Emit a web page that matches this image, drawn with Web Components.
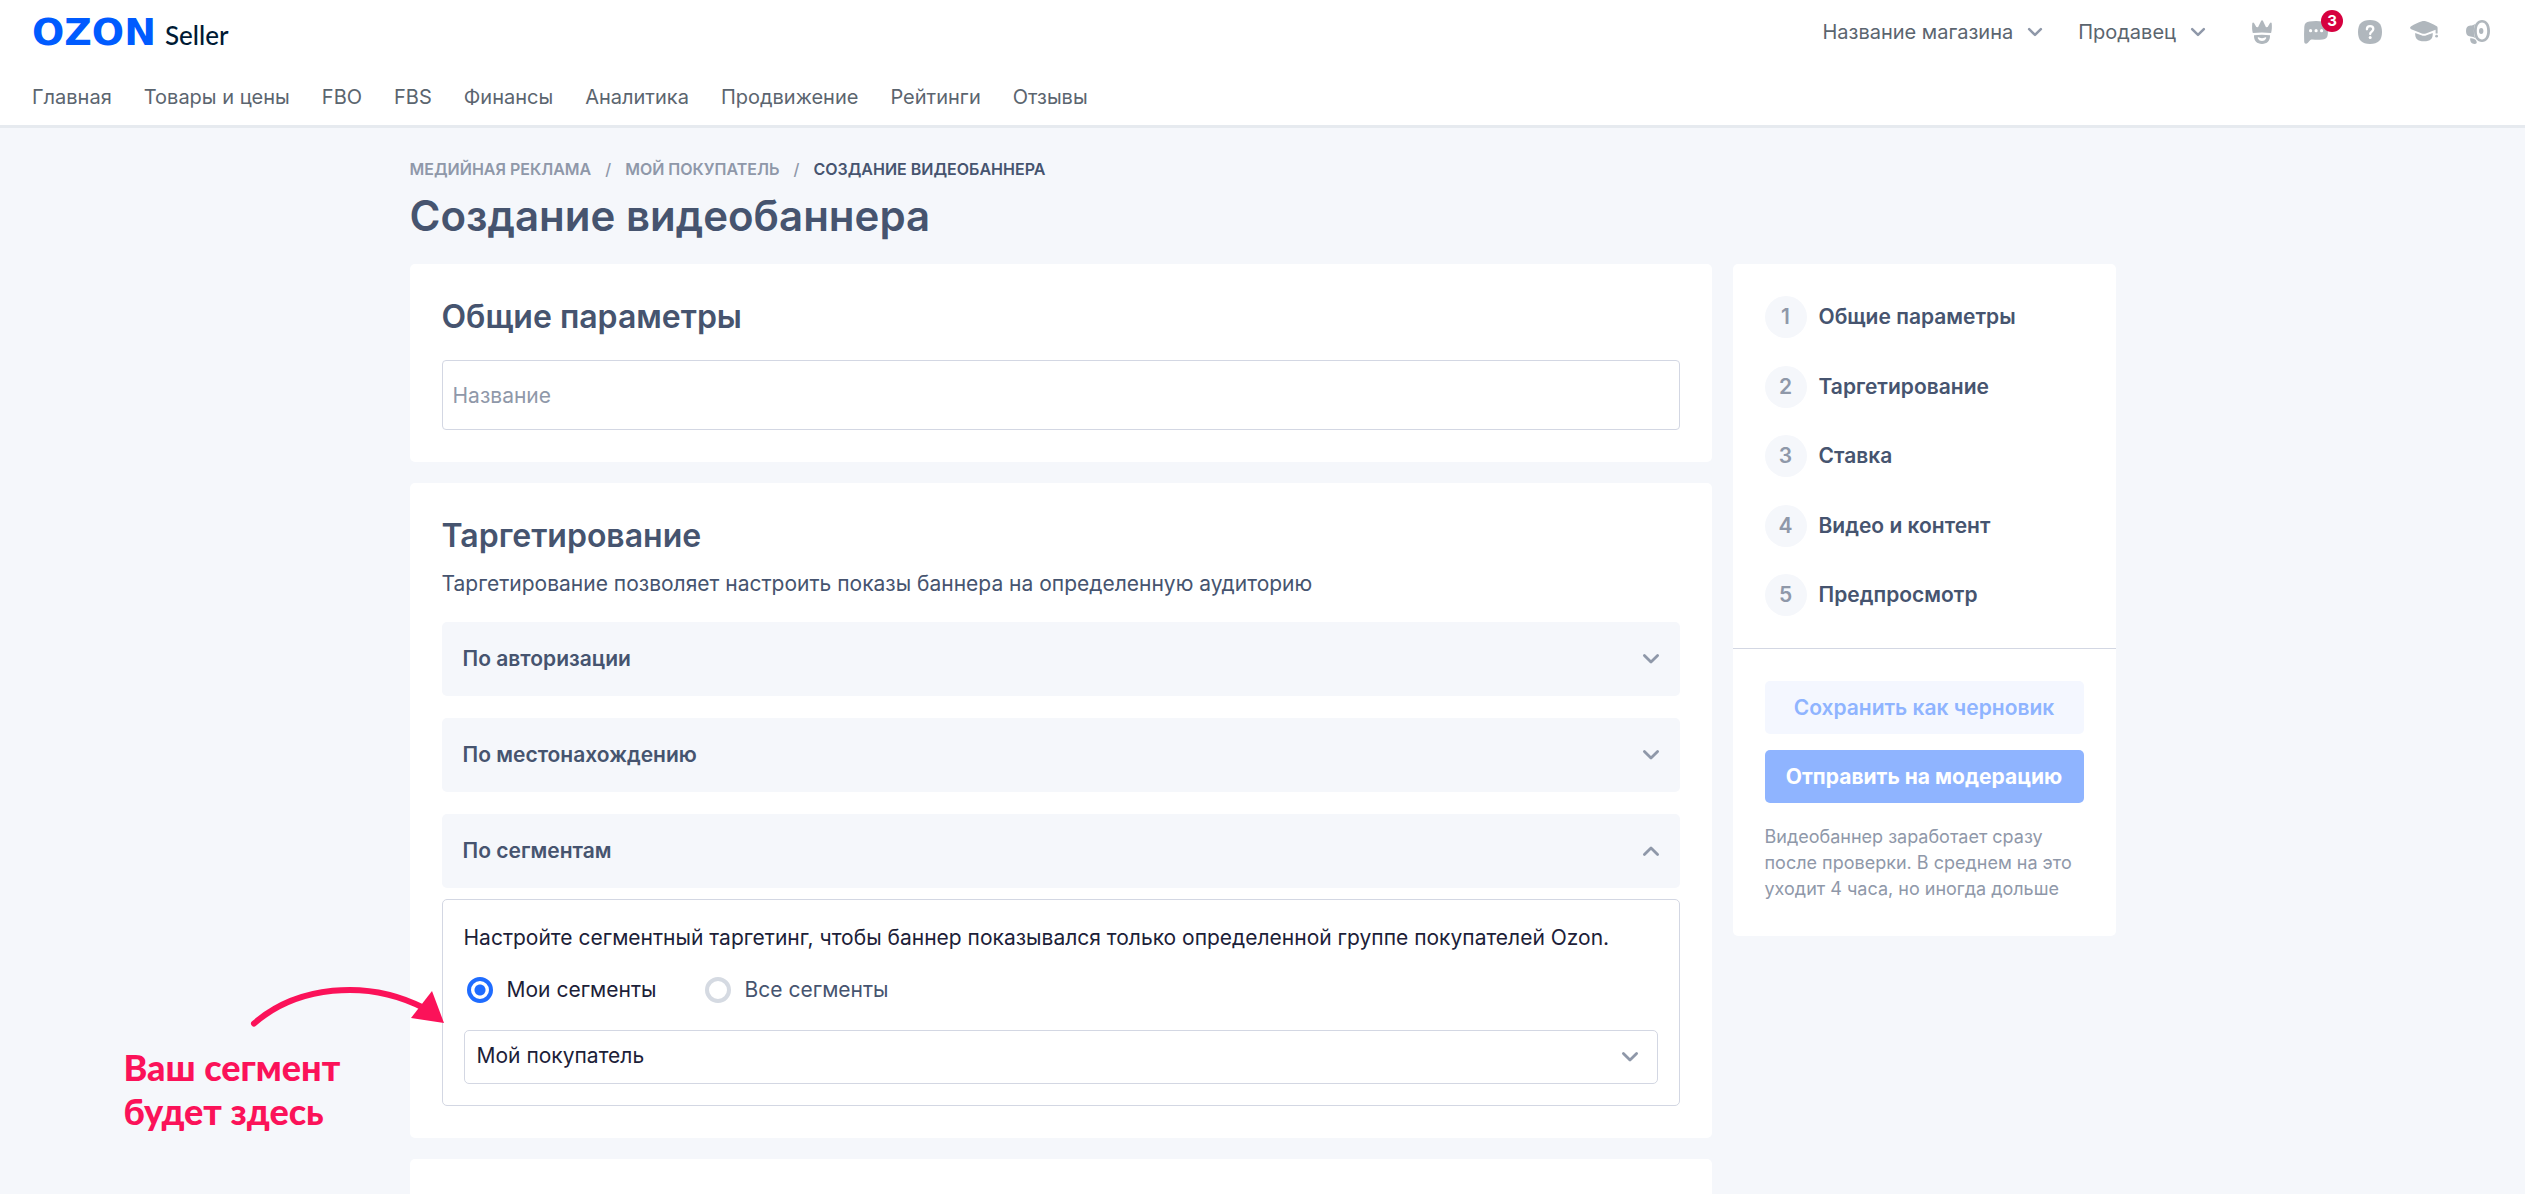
<!DOCTYPE html>
<html lang="ru">
<head>
<meta charset="utf-8">
<title>Создание видеобаннера</title>
<meta name="viewport" content="width=device-width, initial-scale=1">
<style>
  :root {
    --ink: #46546f;
    --ink-dark: #1c2138;
    --muted: #8f98a9;
    --nav: #5b656f;
    --line: #d3d7e3;
    --soft: #f5f7fb;
    --blue: #1f6cff;
    --blue-soft: #8fb4ff;
    --accent: #fb1259;
  }
  body {
    margin: 0;
    background: var(--soft);
    color: var(--ink);
    font: 400 21px/28px Inter, "Open Sans", sans-serif;
  }
</style>
</head>
<body>
<seller-page></seller-page>

<script>
const define = (name, html, setup) => {
  const template = document.createElement('template');
  template.innerHTML = html;
  customElements.define(name, class extends HTMLElement {
    constructor() {
      super();
      this.attachShadow({ mode: 'open' }).append(template.content.cloneNode(true));
    }
    connectedCallback() {
      if (setup && !this.ready) { this.ready = true; setup(this, this.shadowRoot); }
    }
  });
};

define('chevron-icon', `
  <style>
    :host { display: block; width: 18px; color: var(--muted); }
    :host([up]) svg { transform: rotate(180deg); }
    svg { display: block; width: 100%; }
  </style>
  <svg viewBox="0 0 18 12" fill="none" stroke="currentColor" stroke-width="2.8" stroke-linecap="round" stroke-linejoin="round" aria-hidden="true"><path d="M2.4 2.4 9 9l6.600-6.600"/></svg>
`);

define('seller-logo', `
  <style>
    :host { display: block; padding-top: 3px; }
    a { display: flex; align-items: baseline; gap: 9px; text-decoration: none; line-height: 40px; }
    .brand { font: 700 38px/40px "DejaVu Sans", sans-serif; color: #005bff; }
    .sub { font: 500 26px/40px Lato, sans-serif; color: #001a34; }
  </style>
  <a href="#"><span class="brand">OZON</span><span class="sub">Seller</span></a>
`);

define('header-menu', `
  <style>
    :host { display: block; }
    button { display: flex; align-items: center; gap: 14px; padding: 0; border: 0; background: none; font: 400 20px/28px Inter, sans-serif; color: var(--nav); cursor: pointer; }
    chevron-icon { width: 16px; }
  </style>
  <button type="button"><slot></slot><chevron-icon></chevron-icon></button>
`);

define('header-icons', `
  <style>
    :host { display: flex; gap: 30px; }
    button { position: relative; display: block; width: 24px; height: 24px; padding: 0; border: 0; background: none; color: #b0b7bd; cursor: pointer; }
    svg { display: block; width: 24px; height: 24px; overflow: visible; }
    .badge { position: absolute; left: 17px; top: -10px; width: 22px; border-radius: 50%; background: #d6003f; color: #fff; font: 700 15px/22px Inter, sans-serif; text-align: center; }
  </style>
  <button type="button" aria-label="Премиум">
    <svg viewBox="0 0 24 24" fill="currentColor"><path d="M2.300 3.300c.2-1 1.300-1 1.700-.2L6.300 7 8 7.200 11.200.8c.4-.8 1.300-.8 1.700 0L16 7.200l1.700-.2L20 3.100c.5-.8 1.500-.8 1.700.2.4 3.500.2 7-.6 9.800-5.800-.8-12.500-.8-18.300 0-.8-2.800-.9-6.300-.5-9.800Z"/><path fill-rule="evenodd" d="M4 15.300c5.300-.7 10.700-.7 16 0 .3 5.500-3 8.700-8 8.700s-8.300-3.200-8-8.700Zm4.500 1.900c-.7 0-.9.600-.6 1.200.9 1.700 2.300 2.500 4.100 2.500s3.200-.8 4.100-2.500c.3-.6.1-1.200-.6-1.200-.8 0-1.700 1-3.500 1s-2.700-1-3.500-1Z"/></svg>
  </button>
  <button type="button" aria-label="Сообщения">
    <svg viewBox="0 0 24 24" fill="currentColor"><path fill-rule="evenodd" d="M5.500 1.600C9.800.9 14.500.9 18.600 1.600c3.300.5 5 2 5.200 5.200.2 2.700.2 4.900 0 7.500-.3 3.300-1.800 4.800-5.100 5.200-3.300.4-6.700.4-10.100.1-1.300-.1-2.100.3-3.200 1.500l-1.500 1.600C2.200 24.400.3 23.700.2 21.400 0 16.500 0 11.700.3 6.800.5 3.600 2.300 2.100 5.500 1.600ZM6.600 9.100a1.600 1.600 0 1 0 0 3.200 1.600 1.600 0 0 0 0-3.200Zm5.500 0a1.600 1.600 0 1 0 0 3.200 1.600 1.600 0 0 0 0-3.200Zm5.500 0a1.600 1.600 0 1 0 0 3.200 1.600 1.600 0 0 0 0-3.200Z"/></svg>
    <span class="badge">3</span>
  </button>
  <button type="button" aria-label="Помощь">
    <svg viewBox="0 0 24 24"><path fill="currentColor" d="M12 0c8.200 0 12 3.800 12 12s-3.800 12-12 12S0 20.200 0 12 3.800 0 12 0Z"/><path d="M8.900 9.300c0-2 1.300-3.200 3.200-3.200s3.200 1.200 3.200 2.900c0 2.600-3.100 2.500-3.100 5" fill="none" stroke="#fff" stroke-width="2.300" stroke-linecap="round"/><circle cx="12.200" cy="17.600" r="1.500" fill="#fff"/></svg>
  </button>
  <button type="button" aria-label="Обучение">
    <svg viewBox="0 0 24 24" fill="currentColor"><path d="M-.8 6.300C2.500 4.100 6 2.500 10 1.200c1.200-.4 2.600-.4 3.800 0 4 1.300 7.500 2.900 10.900 5.100.7.500.9.900.9 1.700V13.600h-2V9.800l-9.700 3.600c-1.300.5-2.700.5-4 0L-.8 9.200c-1.500-.7-1.500-2 0-2.900Z"/><path d="M3.200 12.900 9.400 15.300c1.700.7 3.400.7 5.100 0l6.200-2.400c.4 5.900-2.300 8.300-8.700 8.300s-9.100-2.400-8.800-8.300Z"/><circle cx="24.600" cy="16.200" r="1.400"/></svg>
  </button>
  <button type="button" aria-label="Новости">
    <svg viewBox="0 0 24 24" fill="currentColor"><path fill-rule="evenodd" d="M16 0c4.800 0 8 4.300 8 11s-3.200 11-8 11-8-4.300-8-11 3.200-11 8-11Zm0 2.600c-3 0-5.200 3-5.200 8.400s2.200 8.400 5.200 8.400 5.200-3 5.200-8.400-2.200-8.400-5.200-8.400Z"/><ellipse cx="15.200" cy="11" rx="2.200" ry="3"/><path d="M9.500 3.700C8.400 5.600 7.900 8 7.900 11s.5 5.500 1.600 7.300c-1.600-1.200-3-1.700-5-1.800C1.300 16.300 0 14.600 0 11s1.300-5.300 4.500-5.500c2-.1 3.400-.6 5-1.800Z"/><path d="M4.200 18.300c2.900-.2 5.100.6 6.200 2.700.8 1.700.2 3-2 3-2.800 0-4.600-2.200-4.200-5.700Z"/></svg>
  </button>
`);

define('seller-header', `
  <style>
    :host { display: block; background: #fff; border-bottom: 3px solid #e6eaef; padding: 0 35px 14px 32px; font-size: 20px; }
    .top { display: flex; align-items: center; justify-content: space-between; height: 64px; }
    .tools { display: flex; align-items: center; gap: 35px; }
    header-icons { margin-left: 9px; }
    nav { display: flex; flex-wrap: wrap; gap: 0 32px; padding-top: 19px; }
    a { color: var(--nav); text-decoration: none; }
  </style>
  <div class="top">
    <seller-logo></seller-logo>
    <div class="tools">
      <header-menu>Название магазина</header-menu>
      <header-menu>Продавец</header-menu>
      <header-icons></header-icons>
    </div>
  </div>
  <nav>
    <a href="#">Главная</a><a href="#">Товары и цены</a><a href="#">FBO</a><a href="#">FBS</a><a href="#">Финансы</a><a href="#">Аналитика</a><a href="#">Продвижение</a><a href="#">Рейтинги</a><a href="#">Отзывы</a>
  </nav>
`);

define('bread-crumbs', `
  <style>
    :host { display: block; }
    ol { display: flex; gap: 14px; margin: 0; padding: 0; list-style: none; font-weight: 600; font-size: 16px; line-height: 24px; text-transform: uppercase; color: var(--muted); }
    li { display: flex; gap: 14px; }
    li + li::before { content: "/"; font-weight: 500; }
    a { color: inherit; text-decoration: none; }
    [aria-current] { color: var(--ink); }
  </style>
  <nav aria-label="Навигация"><ol>
    <li><a href="#">Медийная реклама</a></li>
    <li><a href="#">Мой покупатель</a></li>
    <li><span aria-current="page">Создание видеобаннера</span></li>
  </ol></nav>
`);

define('form-card', `
  <style>
    :host { display: block; box-sizing: border-box; background: #fff; border-radius: 5px; padding: 32px; }
    ::slotted(h2) { margin: 0 0 22px; font: 600 32px/42px Inter, sans-serif; }
  </style>
  <slot></slot>
`);

define('text-field', `
  <style>
    :host { display: block; }
    input { display: block; box-sizing: border-box; width: 100%; height: 70px; margin: 0; padding: 0 10px; border: 1px solid var(--line); border-radius: 4px; background: #fff; color: var(--ink-dark); font: 400 21px/28px Inter, sans-serif; }
    input::placeholder { color: var(--muted); opacity: 1; }
  </style>
  <input type="text" placeholder="Название" aria-label="Название">
`);

define('accordion-item', `
  <style>
    :host { display: block; }
    button { display: flex; align-items: center; justify-content: space-between; width: 100%; height: 74px; padding: 0 20px 0 21px; border: 0; border-radius: 5px; background: var(--soft); color: var(--ink); font: 600 21px/28px Inter, sans-serif; cursor: pointer; }
    .body { margin-top: 11px; }
    .body[hidden] { display: none; }
  </style>
  <button type="button" aria-expanded="false"><slot name="title"></slot><chevron-icon></chevron-icon></button>
  <div class="body" hidden><slot></slot></div>
`, (host, root) => {
  const button = root.querySelector('button');
  const body = root.querySelector('.body');
  const sync = () => {
    const open = host.hasAttribute('open');
    button.setAttribute('aria-expanded', open);
    root.querySelector('chevron-icon').toggleAttribute('up', open);
    body.hidden = !open || host.childElementCount < 2;
  };
  button.addEventListener('click', () => { host.toggleAttribute('open'); sync(); });
  sync();
});

define('callout-note', `
  <style>
    :host { display: flex; flex-direction: column; width: 320px; color: var(--accent); }
    svg { align-self: flex-end; display: block; width: 196px; height: 40px; overflow: visible; }
    p { margin: 17px 0 0; font: 900 36px/44px Lato, sans-serif; }
  </style>
  <svg viewBox="0 0 196 40" aria-hidden="true"><path d="M6 35.500C48-1 117-10 176 20" fill="none" stroke="currentColor" stroke-width="6" stroke-linecap="round"/><path fill="currentColor" d="M184 3 196 35 163 30Z"/></svg>
  <p>Ваш сегмент<br>будет здесь</p>
`);

define('segment-panel', `
  <style>
    :host { display: block; position: relative; border: 1px solid var(--line); border-radius: 5px; padding: 21px; }
    p { margin: 0; line-height: 34px; color: var(--ink-dark); }
    fieldset { display: flex; gap: 45px; margin: 21px 0 26px; padding: 0; border: 0; }
    label { display: flex; align-items: center; gap: 14px; padding-left: 3px; cursor: pointer; }
    label:has(:checked) { color: var(--ink-dark); }
    input { appearance: none; width: 26px; height: 26px; margin: 0; border: 4px solid #d5dae2; border-radius: 50%; background: #fff; }
    input:checked { border-color: var(--blue); background: radial-gradient(circle, var(--blue) 5px, #fff 6px); }
    .select { display: grid; align-items: center; }
    select, .select chevron-icon { grid-area: 1 / 1; }
    select { appearance: none; width: 100%; height: 54px; margin: 0; padding: 0 48px 3px 12px; border: 1px solid var(--line); border-radius: 5px; background: #fff; color: var(--ink-dark); font: 400 21px/28px Inter, sans-serif; }
    .select chevron-icon { justify-self: end; margin-right: 19px; pointer-events: none; }
    callout-note { position: absolute; right: calc(100% - 1px); top: 88px; }
  </style>
  <p>Настройте сегментный таргетинг, чтобы баннер показывался только определенной группе покупателей Ozon.</p>
  <fieldset aria-label="Сегменты">
    <label><input type="radio" name="segments" checked>Мои сегменты</label>
    <label><input type="radio" name="segments">Все сегменты</label>
  </fieldset>
  <div class="select">
    <select aria-label="Сегмент"><option>Мой покупатель</option></select>
    <chevron-icon></chevron-icon>
  </div>
  <callout-note></callout-note>
`);

define('steps-card', `
  <style>
    :host { display: block; background: #fff; border-radius: 5px; }
    ol { display: flex; flex-direction: column; justify-content: space-between; min-height: 320px; margin: 0; padding: 32px; list-style: none; border-bottom: 1px solid var(--line); }
    a { display: flex; align-items: center; gap: 12px; color: var(--ink); font-weight: 600; text-decoration: none; }
    .num { width: 42px; border-radius: 50%; background: var(--soft); color: var(--muted); line-height: 42px; text-align: center; }
    .actions { display: flex; flex-direction: column; gap: 16px; padding: 32px; }
    button { height: 53px; padding: 0; border: 0; border-radius: 5px; font: 600 21px/28px Inter, sans-serif; white-space: nowrap; }
    .draft { background: #f4f7ff; color: var(--blue-soft); }
    .send { background: var(--blue-soft); color: #fff; font-weight: 700; }
    p { margin: 5px 0 2px; font-size: 18px; line-height: 26px; color: var(--muted); }
  </style>
  <ol>
    <li><a href="#"><span class="num">1</span>Общие параметры</a></li>
    <li><a href="#"><span class="num">2</span>Таргетирование</a></li>
    <li><a href="#"><span class="num">3</span>Ставка</a></li>
    <li><a href="#"><span class="num">4</span>Видео и контент</a></li>
    <li><a href="#"><span class="num">5</span>Предпросмотр</a></li>
  </ol>
  <div class="actions">
    <button type="button" class="draft">Сохранить как черновик</button>
    <button type="button" class="send">Отправить на модерацию</button>
    <p>Видеобаннер заработает сразу после проверки. В&nbsp;среднем на это уходит 4&nbsp;часа, но иногда дольше</p>
  </div>
`);

define('seller-page', `
  <style>
    :host { display: flex; flex-direction: column; min-height: 100vh; }
    main { flex: 1; display: flex; flex-direction: column; box-sizing: border-box; width: 100%; max-width: 1706px; margin: 0 auto; padding-top: 29px; }
    h1 { margin: 7px 0 20px; font: 600 42px/56px Inter, sans-serif; }
    .columns { flex: 1; display: grid; grid-template-columns: minmax(0, 1fr) 383px; gap: 21px; }
    .forms { display: flex; flex-direction: column; gap: 21px; }
    steps-card { align-self: start; }
    .lead { margin: -9px 0 24px; }
    .stack { display: flex; flex-direction: column; gap: 22px; }
    .rest { flex: 1; border-radius: 5px 5px 0 0; padding: 16px; }
  </style>
  <seller-header></seller-header>
  <main>
    <bread-crumbs></bread-crumbs>
    <h1>Создание видеобаннера</h1>
    <div class="columns">
      <div class="forms">
        <form-card><h2>Общие параметры</h2><text-field></text-field></form-card>
        <form-card>
          <h2>Таргетирование</h2>
          <p class="lead">Таргетирование позволяет настроить показы баннера на определенную аудиторию</p>
          <div class="stack">
            <accordion-item><span slot="title">По авторизации</span></accordion-item>
            <accordion-item><span slot="title">По местонахождению</span></accordion-item>
            <accordion-item open><span slot="title">По сегментам</span><segment-panel></segment-panel></accordion-item>
          </div>
        </form-card>
        <form-card class="rest"></form-card>
      </div>
      <steps-card></steps-card>
    </div>
  </main>
`);
</script>
</body>
</html>
